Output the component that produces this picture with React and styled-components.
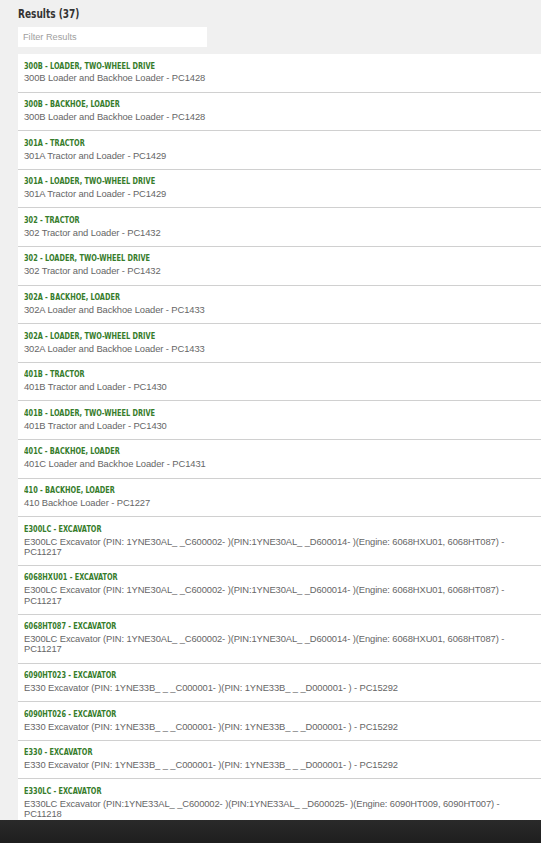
import React from 'react'
import styled, { createGlobalStyle } from 'styled-components'

const GlobalStyle = createGlobalStyle`
  html, body {
    margin: 0;
    padding: 0;
    background: #f0f0f0;
  }
`

const pinE300 =
  'E300LC Excavator (PIN: 1YNE30AL_ _C600002- )(PIN:1YNE30AL_ _D600014- )(Engine: 6068HXU01, 6068HT087) - PC11217'
const pinE330 =
  'E330 Excavator (PIN: 1YNE33B_ _ _C000001- )(PIN: 1YNE33B_ _ _D000001- ) - PC15292'

const results = [
  ['300B - LOADER, TWO-WHEEL DRIVE', '300B Loader and Backhoe Loader - PC1428'],
  ['300B - BACKHOE, LOADER', '300B Loader and Backhoe Loader - PC1428'],
  ['301A - TRACTOR', '301A Tractor and Loader - PC1429'],
  ['301A - LOADER, TWO-WHEEL DRIVE', '301A Tractor and Loader - PC1429'],
  ['302 - TRACTOR', '302 Tractor and Loader - PC1432'],
  ['302 - LOADER, TWO-WHEEL DRIVE', '302 Tractor and Loader - PC1432'],
  ['302A - BACKHOE, LOADER', '302A Loader and Backhoe Loader - PC1433'],
  ['302A - LOADER, TWO-WHEEL DRIVE', '302A Loader and Backhoe Loader - PC1433'],
  ['401B - TRACTOR', '401B Tractor and Loader - PC1430'],
  ['401B - LOADER, TWO-WHEEL DRIVE', '401B Tractor and Loader - PC1430'],
  ['401C - BACKHOE, LOADER', '401C Loader and Backhoe Loader - PC1431'],
  ['410 - BACKHOE, LOADER', '410 Backhoe Loader - PC1227'],
  ['E300LC - EXCAVATOR', pinE300],
  ['6068HXU01 - EXCAVATOR', pinE300],
  ['6068HT087 - EXCAVATOR', pinE300],
  ['6090HT023 - EXCAVATOR', pinE330],
  ['6090HT026 - EXCAVATOR', pinE330],
  ['E330 - EXCAVATOR', pinE330],
  [
    'E330LC - EXCAVATOR',
    'E330LC Excavator (PIN:1YNE33AL_ _C600002- )(PIN:1YNE33AL_ _D600025- )(Engine: 6090HT009, 6090HT007) - PC11218',
  ],
]

// 결과 목록 페이지 (전체 37개 중 화면에 보이는 것만)
const App = () => {
  return (
    <Page>
      <GlobalStyle />
      <Content>
        <Heading>
          <Condensed $scale={0.77}>Results (37)</Condensed>
        </Heading>
        <Filter placeholder="Filter Results" />
        <List>
          {results.map(([title, desc], idx) => (
            <Row key={`result_${idx}`}>
              <RowTitle>
                <Condensed $scale={0.86}>{title}</Condensed>
              </RowTitle>
              <RowDesc>{desc}</RowDesc>
            </Row>
          ))}
        </List>
      </Content>
      <Footer />
    </Page>
  )
}

const Page = styled.div`
  display: flex;
  flex-direction: column;
  height: 100vh;
  overflow: hidden;
`
const Content = styled.div`
  flex: 1;
  min-height: 0;
  overflow: hidden;
  padding-left: 18px;
`
const Condensed = styled.span`
  display: inline-block;
  vertical-align: top;
  white-space: nowrap;
  transform: scaleX(${(p) => p.$scale});
  transform-origin: left center;
`
const Heading = styled.h1`
  margin: 6px 0 6px;
  font-family: 'DejaVu Sans Condensed', 'DejaVu Sans', sans-serif;
  font-weight: bold;
  font-size: 13px;
  line-height: 15px;
  color: #333;
`
const Filter = styled.input`
  display: block;
  box-sizing: border-box;
  width: 189px;
  height: 20px;
  margin: 0 0 7px;
  padding: 0 5px;
  border: none;
  outline: none;
  background: #fff;
  font-family: 'Liberation Sans', Arial, sans-serif;
  font-size: 9.2px;
  color: #333;
  &::placeholder {
    color: #a0a0a0;
  }
`
const List = styled.div`
  background: #fff;
`
const Row = styled.div`
  padding: 6.5px 30px 8px 6px;
  border-bottom: 1px solid #d0d0d0;
`
const RowTitle = styled.div`
  height: 10.4px;
  font-family: 'DejaVu Sans Condensed', 'DejaVu Sans', sans-serif;
  font-weight: bold;
  font-size: 8.5px;
  line-height: 10.4px;
  color: #367c2b;
`
const RowDesc = styled.div`
  margin-top: 2.5px;
  font-family: 'Liberation Sans', Arial, sans-serif;
  font-size: 9.4px;
  line-height: 10.2px;
  letter-spacing: -0.1px;
  color: #666;
`
const Footer = styled.div`
  height: 23px;
  flex-shrink: 0;
  background: linear-gradient(#2a2a2a, #1e1e1e);
`

export default App
